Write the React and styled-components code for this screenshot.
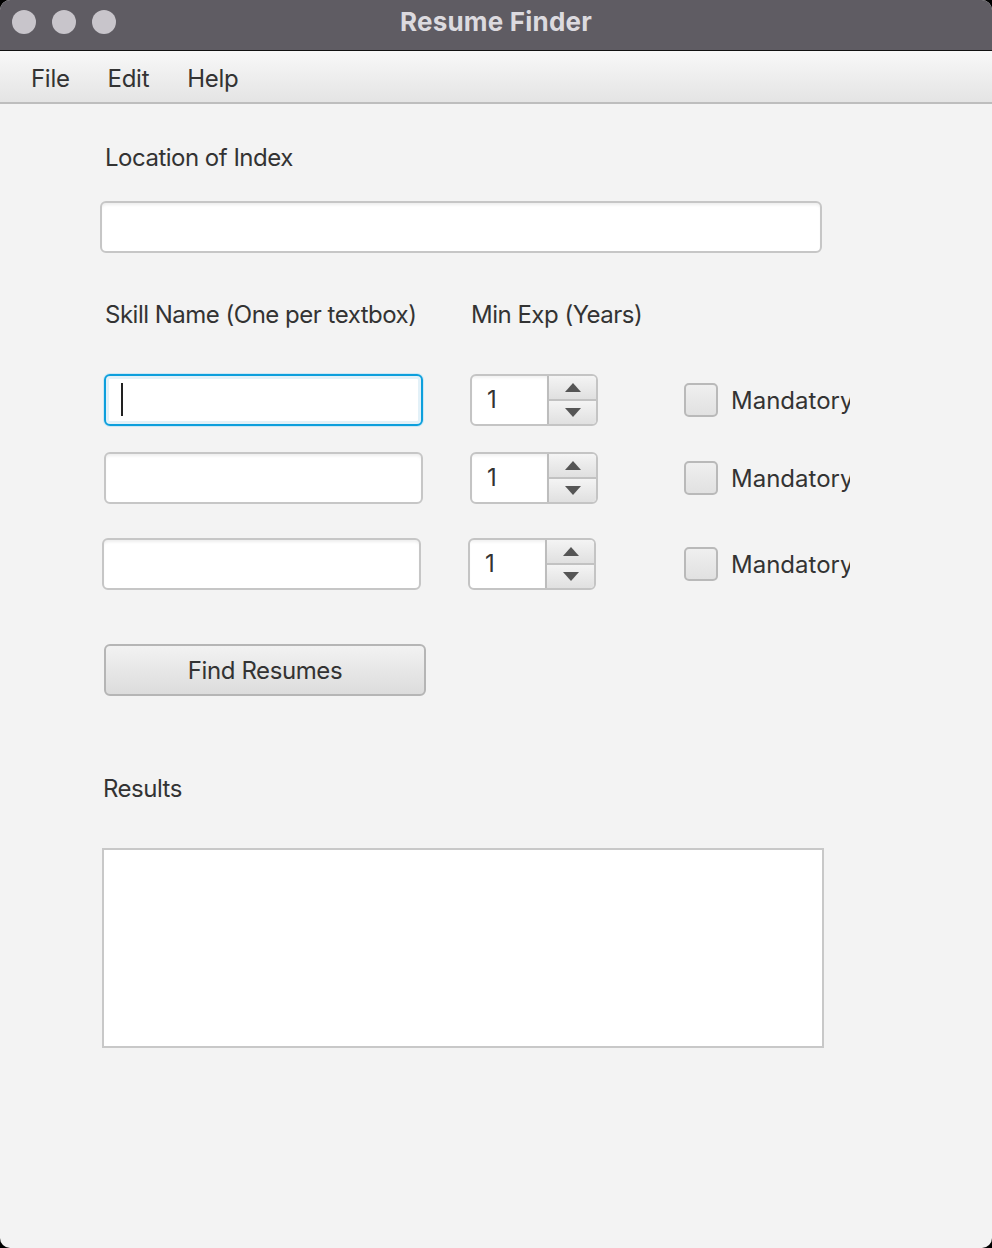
import React from "react";
import styled, { createGlobalStyle } from "styled-components";

const Global = createGlobalStyle`
  html, body { margin: 0; padding: 0; background: #000; }
  body { font-family: Inter, "Noto Sans", "Liberation Sans", sans-serif; }
  * { box-sizing: border-box; }
`;

const Window = styled.div`
  width: 992px;
  height: 1248px;
  background: #f3f3f3;
  border-radius: 10px;
  overflow: hidden;
  display: flex;
  flex-direction: column;
  color: #333;
`;

const TitleBar = styled.div`
  height: 51px;
  flex: none;
  background: #5f5c63;
  border-bottom: 1px solid #111;
  position: relative;
  display: flex;
  align-items: center;
  justify-content: center;
`;

const Lights = styled.div`
  position: absolute;
  left: 12px;
  top: 10px;
  display: flex;
  gap: 16px;
`;

const Light = styled.span`
  width: 24px;
  height: 24px;
  border-radius: 50%;
  background: #c8c5cb;
`;

const Title = styled.div`
  font-weight: 700;
  font-size: 26px;
  color: #dcdadf;
  margin-top: -7px;
  letter-spacing: 0.2px;
`;

const MenuBar = styled.div`
  height: 53px;
  flex: none;
  background: linear-gradient(#f8f8f8, #e4e4e4);
  border-bottom: 2px solid #bdbdbd;
  display: flex;
  align-items: center;
  padding: 3px 0 0 31px;
  gap: 38px;
`;

const MenuItem = styled.span`
  font-size: 24px;
  color: #333;
  letter-spacing: -0.3px;
`;

const Content = styled.div`
  display: flex;
  flex-direction: column;
  align-items: flex-start;
  padding: 39px 0 0 100px;
`;

const Label = styled.div`
  height: 30px;
  line-height: 30px;
  font-size: 24px;
  letter-spacing: -0.5px;
  color: #333;
  margin-left: ${(p) => p.$ml || 0}px;
  margin-top: ${(p) => p.$mt || 0}px;
  white-space: nowrap;
`;

const LabelRow = styled.div`
  display: flex;
  margin-top: ${(p) => p.$mt || 0}px;
  margin-left: 5px;
`;

const Input = styled.div`
  width: ${(p) => p.$w}px;
  height: 52px;
  flex: none;
  background: #fff;
  border: 2px solid #c6c6c6;
  border-radius: 6px;
  box-shadow: inset 0 3px 3px -1px rgba(0, 0, 0, 0.07);
  margin-left: ${(p) => p.$ml || 0}px;
  margin-top: ${(p) => p.$mt || 0}px;
  position: relative;
`;

const FocusInput = styled(Input)`
  border: 2px solid #0d9fdc;
  box-shadow: 0 0 0 1px #cde8f5, inset 0 0 0 3px #e3f1f8;
`;

const Caret = styled.span`
  position: absolute;
  left: 15px;
  top: 7px;
  width: 2px;
  height: 33px;
  background: #222;
`;

const Row = styled.div`
  display: flex;
  align-items: center;
  margin-top: ${(p) => p.$mt || 0}px;
  margin-left: ${(p) => p.$ml || 0}px;
`;

const Spinner = styled.div`
  width: 128px;
  height: 52px;
  margin-left: 47px;
  display: flex;
  border: 2px solid #c4c4c4;
  border-radius: 6px;
  overflow: hidden;
  background: #fff;
`;

const SpinValue = styled.div`
  width: 75px;
  font-size: 24px;
  line-height: 48px;
  padding-left: 15px;
  color: #333;
  box-shadow: inset 0 3px 3px -1px rgba(0, 0, 0, 0.06);
`;

const SpinButtons = styled.div`
  flex: 1;
  display: flex;
  flex-direction: column;
  border-left: 2px solid #bdbdbd;
`;

const SpinBtn = styled.div`
  flex: 1;
  display: flex;
  align-items: center;
  justify-content: center;
  background: linear-gradient(#f4f4f4, #e0e0e0);
  & + & {
    border-top: 2px solid #c2c2c2;
  }
`;

const CheckGroup = styled.div`
  margin-left: ${(p) => p.$ml}px;
  width: 166px;
  overflow: hidden;
  display: flex;
  align-items: center;
  gap: 13px;
`;

const Box = styled.span`
  width: 34px;
  height: 34px;
  flex: none;
  border: 2px solid #b9b9b9;
  border-radius: 5px;
  background: linear-gradient(#efefef, #e1e1e1);
`;

const CheckText = styled.span`
  font-size: 24px;
  letter-spacing: 0px;
  color: #333;
  white-space: nowrap;
`;

const Button = styled.div`
  width: 322px;
  height: 52px;
  margin-top: 54px;
  margin-left: 4px;
  border: 2px solid #b5b5b5;
  border-radius: 6px;
  background: linear-gradient(#f2f2f2, #dcdcdc);
  display: flex;
  align-items: center;
  justify-content: center;
  font-size: 24px;
  letter-spacing: -0.4px;
  color: #333;
`;

const ResultsBox = styled.div`
  width: 722px;
  height: 200px;
  margin-top: 44px;
  margin-left: 2px;
  background: #fff;
  border: 2px solid #c8c8c8;
`;

const Arrow = ({ up }) => (
  <svg width="16" height="9" viewBox="0 0 16 9">
    <path d={up ? "M0 9 L8 0 L16 9 Z" : "M0 0 L8 9 L16 0 Z"} fill="#555" />
  </svg>
);

const SkillRow = ({ focused, mt, ml }) => (
  <Row $mt={mt} $ml={ml}>
    {focused ? (
      <FocusInput $w={319}>
        <Caret />
      </FocusInput>
    ) : (
      <Input $w={319} />
    )}
    <Spinner>
      <SpinValue>1</SpinValue>
      <SpinButtons>
        <SpinBtn>
          <Arrow up />
        </SpinBtn>
        <SpinBtn>
          <Arrow />
        </SpinBtn>
      </SpinButtons>
    </Spinner>
    <CheckGroup $ml={86 + (4 - ml)}>
      <Box />
      <CheckText>Mandatory</CheckText>
    </CheckGroup>
  </Row>
);

export default function App() {
  return (
    <>
      <Global />
      <Window>
        <TitleBar>
          <Lights>
            <Light />
            <Light />
            <Light />
          </Lights>
          <Title>Resume Finder</Title>
        </TitleBar>
        <MenuBar>
          <MenuItem>File</MenuItem>
          <MenuItem>Edit</MenuItem>
          <MenuItem>Help</MenuItem>
        </MenuBar>
        <Content>
          <Label $ml={5}>Location of Index</Label>
          <Input $w={722} $mt={28} />
          <LabelRow $mt={47}>
            <Label style={{ width: 366 }}>Skill Name (One per textbox)</Label>
            <Label>Min Exp (Years)</Label>
          </LabelRow>
          <SkillRow focused mt={44} ml={4} />
          <SkillRow mt={26} ml={4} />
          <SkillRow mt={34} ml={2} />
          <Button>Find Resumes</Button>
          <Label $ml={3} $mt={78}>Results</Label>
          <ResultsBox />
        </Content>
      </Window>
    </>
  );
}
